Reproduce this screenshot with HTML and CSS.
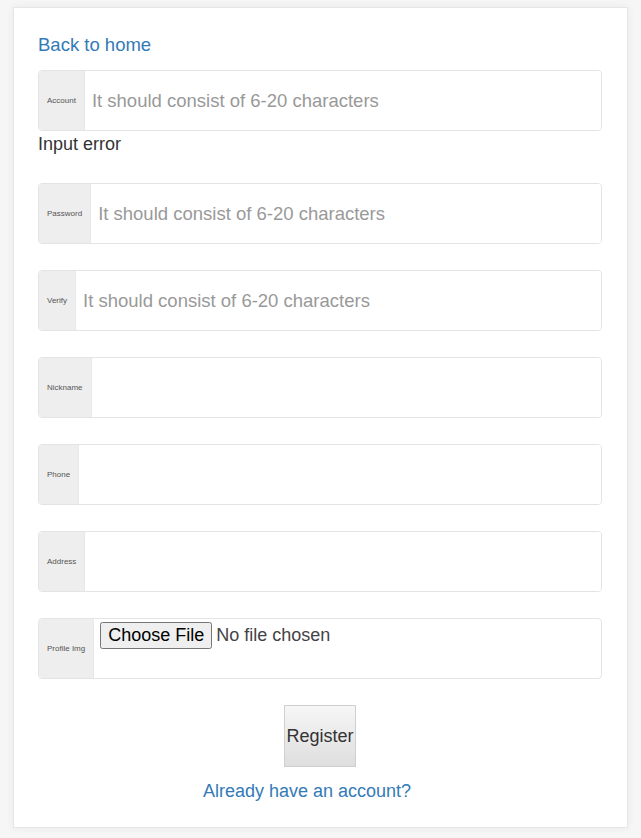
FILE: index.html
```html
<!DOCTYPE html>
<html lang="en">
<head>
<meta charset="utf-8">
<title>Register</title>
<link rel="stylesheet" href="styles.css">
</head>
<body>
<div class="card">
  <a class="link back" href="#">Back to home</a>
  <form class="form">
    <div class="field">
      <div class="group">
        <span class="addon">Account</span>
        <input class="control" type="text" placeholder="It should consist of 6-20 characters">
      </div>
      <div class="error">Input error</div>
    </div>
    <div class="field">
      <div class="group">
        <span class="addon">Password</span>
        <input class="control" type="password" placeholder="It should consist of 6-20 characters">
      </div>
    </div>
    <div class="field">
      <div class="group">
        <span class="addon">Verify</span>
        <input class="control" type="password" placeholder="It should consist of 6-20 characters">
      </div>
    </div>
    <div class="field">
      <div class="group">
        <span class="addon">Nickname</span>
        <input class="control" type="text">
      </div>
    </div>
    <div class="field">
      <div class="group">
        <span class="addon">Phone</span>
        <input class="control" type="text">
      </div>
    </div>
    <div class="field">
      <div class="group">
        <span class="addon">Address</span>
        <input class="control" type="text">
      </div>
    </div>
    <div class="field">
      <div class="group">
        <span class="addon">Profile Img</span>
        <input class="file" type="file">
      </div>
    </div>
    <div class="actions">
      <button class="btn" type="button">Register</button>
      <a class="link login" href="#">Already have an account?</a>
    </div>
  </form>
</div>
</body>
</html>
```
FILE: styles.css
```css
html, body {
  margin: 0;
  padding: 0;
}
body {
  background: #f6f6f6;
  padding: 7px 13px 10px;
  font-family: "Liberation Sans", Arial, sans-serif;
  font-size: 18px;
  line-height: 26px;
  color: #333;
}
.card {
  background: #fff;
  border: 1px solid #e6e6e6;
  box-shadow: 0 0 8px rgba(0, 0, 0, 0.06);
  padding: 24px 25px 24px 24px;
  box-sizing: border-box;
  height: 821px;
}
.link {
  color: #337ab7;
  text-decoration: none;
}
.back {
  display: block;
  width: max-content;
  margin-bottom: 12px;
  font-size: 18.5px;
}
.form {
  display: flex;
  flex-direction: column;
  gap: 26px;
}
.group {
  display: flex;
  height: 61px;
  box-sizing: border-box;
  border: 1px solid #e4e4e4;
  border-radius: 4px;
  overflow: hidden;
}
.addon {
  display: flex;
  align-items: center;
  padding: 0 8px;
  background: #eee;
  border-right: 1px solid #e8e8e8;
  font-size: 8px;
  color: #555;
  white-space: nowrap;
}
.control {
  flex: 1;
  min-width: 0;
  border: none;
  outline: none;
  padding: 0 7px;
  font-family: "Liberation Sans", Arial, sans-serif;
  font-size: 18.5px;
  color: #555;
  background: #fff;
}
.control::placeholder {
  color: #999;
}
.file {
  align-self: flex-start;
  margin: 3px 0 0 6px;
  font-family: "Liberation Sans", Arial, sans-serif;
  font-size: 18px;
  color: #444;
}
.error {
  color: #333;
}
.actions {
  display: flex;
  flex-direction: column;
  align-items: center;
  gap: 11px;
}
.btn {
  height: 62px;
  padding: 0 1px;
  border: 1px solid #cfcfcf;
  border-radius: 0;
  background: linear-gradient(#f6f6f6, #dedede);
  font-family: "Liberation Sans", Arial, sans-serif;
  font-size: 18px;
  color: #333;
}
.login {
  display: block;
  margin-right: 26px;
}
```
